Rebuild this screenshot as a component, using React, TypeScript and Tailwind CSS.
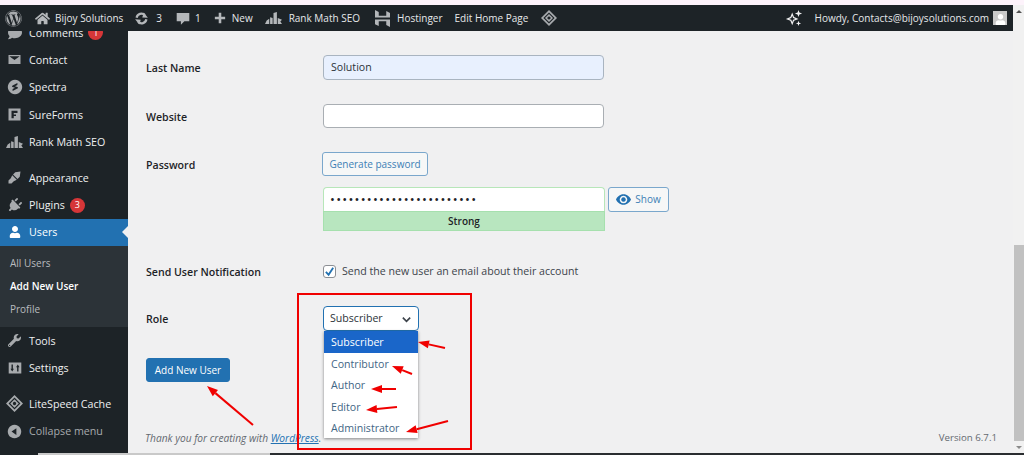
import type { ReactNode } from "react";
import { FaWordpress, FaHome, FaWrench, FaPlug, FaUser, FaComment } from "react-icons/fa";

const WpIcon = ({ children, className = "" }: { children: ReactNode; className?: string }) => (
  <svg viewBox="0 0 20 20" className={`w-[15px] h-[15px] ${className}`} fill="currentColor">
    {children}
  </svg>
);

const RankMathIcon = ({ className = "" }: { className?: string }) => (
  <svg viewBox="0 0 20 14" className={`w-[17px] h-[12px] ${className}`} fill="currentColor">
    <path d="M0 14 L2 10 L5 8 L5 14 Z M6 14 V6 L9 7 L9 14 Z M10 14 V1 L14 0 V14 Z M15 14 V7 L20 9 L18 11 L20 14 Z" />
  </svg>
);

const DiamondIcon = ({ size = 16 }: { size?: number }) => (
  <svg viewBox="0 0 20 20" width={size} height={size} fill="currentColor">
    <path d="M10 0 L20 10 L10 20 L0 10 Z M10 3 L3 10 L10 17 L17 10 Z" fillRule="evenodd" />
    <path d="M10 5 L15 10 L10 15 L5 10 Z M10 8 a2 2 0 1 0 .01 0 Z" fillRule="evenodd" />
  </svg>
);

const AdminBar = () => (
  <div className="h-[26px] bg-[#1d2327] text-[#e6e8ea] text-[10px] flex items-center justify-between pl-[5px] pr-[6px]">
    <div className="flex items-center">
      <FaWordpress className="w-[17px] h-[17px] text-[#a7aaad]" />
      <FaHome className="w-[15px] h-[15px] text-[#b4b7ba] ml-[13px]" />
      <span className="ml-[5px]">Bijoy Solutions</span>
      <svg viewBox="0 0 20 20" className="w-[15px] h-[15px] text-[#b4b7ba] ml-[11px]" fill="none" stroke="currentColor" strokeWidth="3">
        <path d="M3.500 9 A6.500 6.500 0 0 1 14.500 5.500" />
        <path d="M16.500 11 A6.500 6.500 0 0 1 5.500 14.500" />
        <path d="M13 2 L18.500 9 L11 8.500 Z M7 18 L1.500 11 L9 11.500 Z" fill="currentColor" stroke="none" />
      </svg>
      <span className="ml-[7px]">3</span>
      <svg viewBox="0 0 20 20" className="w-[14px] h-[15px] text-[#b4b7ba] ml-[14px]" fill="currentColor">
        <path d="M1 2 H19 V14 H12 L7 19 V14 H1 Z" />
      </svg>
      <span className="ml-[5px]">1</span>
      <svg viewBox="0 0 14 14" className="w-[12px] h-[12px] text-[#b4b7ba] ml-[13px]" fill="currentColor">
        <path d="M5.500 1 H8.500 V5.500 H13 V8.500 H8.500 V13 H5.500 V8.500 H1 V5.500 H5.500 Z" />
      </svg>
      <span className="ml-[6px]">New</span>
      <RankMathIcon className="text-[#b4b7ba] ml-[12px]" />
      <span className="ml-[7px]">Rank Math SEO</span>
      <svg viewBox="0 0 16 18" className="w-[15px] h-[17px] text-[#b4b7ba] ml-[15px]" fill="currentColor">
        <path d="M0 0 L4 2 V6 L12 6 V1 L16 3 V8 H0 Z M0 10 H16 V18 L12 16 V12 H4 V17 L0 15 Z" />
      </svg>
      <span className="ml-[7px]">Hostinger</span>
      <span className="ml-[12px]">Edit Home Page</span>
      <span className="text-[#a7aaad] ml-[13px]">
        <DiamondIcon />
      </span>
    </div>
    <div className="flex items-center">
      <svg viewBox="0 0 20 20" className="w-[18px] h-[18px] text-[#f0f0f1] mr-[12px]" fill="currentColor">
        <path
          fillRule="evenodd"
          d="M8 4 L10 9 L15 11 L10 13 L8 18 L6 13 L1 11 L6 9 Z M8 7.500 L7 10 L4.500 11 L7 12 L8 14.500 L9 12 L11.500 11 L9 10 Z"
        />
        <path d="M15 1 L16 4 L19 5 L16 6 L15 9 L14 6 L11 5 L14 4 Z M15 13 L15.800 15.200 L18 16 L15.800 16.800 L15 19 L14.200 16.800 L12 16 L14.200 15.200 Z" />
      </svg>
      <span>Howdy, Contacts@bijoysolutions.com</span>
      <div className="w-[14px] h-[14px] bg-[#c9c9c9] ml-[4px] overflow-hidden flex items-center justify-center">
        <FaUser className="w-[11px] h-[11px] text-white mt-[3px]" />
      </div>
    </div>
  </div>
);

const MenuItem = ({
  icon,
  label,
  badge,
  active,
  muted,
}: {
  icon: ReactNode;
  label: string;
  badge?: string;
  active?: boolean;
  muted?: boolean;
}) => (
  <div
    className={`relative h-[27.3px] flex items-center shrink-0 ${
      active ? "bg-[#2271b1] text-white" : muted ? "text-[#a7aaad]" : "text-[#eef0f1]"
    }`}
  >
    <div className={`w-[29px] flex justify-center ${active ? "text-white" : "text-[#a7aaad]"}`}>{icon}</div>
    <span>{label}</span>
    {badge && (
      <span className="ml-[5px] w-[15px] h-[15px] rounded-full bg-[#d63638] text-white text-[9px] flex items-center justify-center">
        {badge}
      </span>
    )}
    {active && (
      <span className="absolute right-0 top-1/2 -translate-y-1/2 border-y-[6px] border-y-transparent border-r-[6px] border-r-[#f0f0f1]" />
    )}
  </div>
);

const Sidebar = () => (
  <div className="w-[128px] shrink-0 bg-[#1d2327] overflow-hidden flex flex-col text-[10.7px]">
    <div className="-mt-[12px]" />
    <MenuItem icon={<FaComment className="w-[14px] h-[14px]" />} label="Comments" badge="1" />
    <MenuItem
      icon={
        <WpIcon>
          <path d="M2 4 H18 V16 H2 Z M3.500 6 L10 10.500 L16.500 6 V5.500 H3.500 Z" fillRule="evenodd" />
        </WpIcon>
      }
      label="Contact"
    />
    <MenuItem
      icon={
        <WpIcon className="!w-[16px] !h-[16px]">
          <path
            fillRule="evenodd"
            d="M10 1 a9 9 0 1 0 .01 0 Z M13 5 L7 8 Q5.500 9 7 10 L10 11 L7 12.500 V15 L13 12 Q14.500 11 13 10 L10 9 L13 7.500 Z"
          />
        </WpIcon>
      }
      label="Spectra"
    />
    <MenuItem
      icon={
        <WpIcon>
          <path fillRule="evenodd" d="M2 2 H18 V18 H2 Z M6 5 V15 H9 V12 H12 V10 H9 V8 H14 V5 Z" />
        </WpIcon>
      }
      label="SureForms"
    />
    <MenuItem icon={<RankMathIcon />} label="Rank Math SEO" />
    <div className="h-[8.7px] shrink-0" />
    <MenuItem
      icon={
        <WpIcon>
          <path d="M11 3 L18 2 L17 9 L14 12 L8 6 Z M7 7 L13 13 L9 15 L6 18 L2 18 L2 14 L5 11 Z" />
        </WpIcon>
      }
      label="Appearance"
    />
    <MenuItem icon={<FaPlug className="w-[15px] h-[15px] rotate-[45deg]" />} label="Plugins" badge="3" />
    <MenuItem active icon={<FaUser className="w-[12px] h-[12px]" />} label="Users" />
    <div className="bg-[#2c3338] h-[81px] shrink-0 py-[5.5px] pl-[10px] flex flex-col text-[10px] text-[#b9bcbf]">
      <div className="h-[23px] flex items-center">All Users</div>
      <div className="h-[23px] flex items-center text-white font-semibold">Add New User</div>
      <div className="h-[23px] flex items-center">Profile</div>
    </div>
    <MenuItem icon={<FaWrench className="w-[13px] h-[13px]" />} label="Tools" />
    <MenuItem
      icon={
        <WpIcon className="!w-[14px] !h-[14px]">
          <path
            fillRule="evenodd"
            d="M1 2 H19 V18 H1 Z M5 5 V11 H3.500 L6 15 L8.500 11 H7 V5 Z M13 15 V9 H11.500 L14 5 L16.500 9 H15 V15 Z"
          />
        </WpIcon>
      }
      label="Settings"
    />
    <div className="h-[8.7px] shrink-0" />
    <MenuItem icon={<DiamondIcon size={17} />} label="LiteSpeed Cache" />
    <MenuItem
      muted
      icon={
        <WpIcon>
          <path fillRule="evenodd" d="M10 1 a9 9 0 1 0 .01 0 Z M12.500 5.500 L6 10 L12.500 14.500 Z" />
        </WpIcon>
      }
      label="Collapse menu"
    />
  </div>
);

const FieldLabel = ({ children }: { children: ReactNode }) => (
  <div className="w-[177px] shrink-0 pt-[3px] font-semibold text-[10.6px] text-[#1d2327]">{children}</div>
);

const RoleMenu = () => (
  <div className="absolute left-0 top-[24px] w-[94px] h-[107px] bg-white shadow-[0_1px_3px_rgba(0,0,0,0.45)] flex flex-col text-[#3f6685] z-10">
    <div className="h-[22px] bg-[#1a66c9] text-white flex items-center pl-[7px] pt-[1px]">Subscriber</div>
    <div className="h-[22px] flex items-center pl-[7px] pt-[1px]">Contributor</div>
    <div className="h-[21px] flex items-center pl-[7px]">Author</div>
    <div className="h-[22px] flex items-center pl-[7px] pt-[1px]">Editor</div>
    <div className="h-[20px] flex items-center pl-[7px] pt-[1px]">Administrator</div>
  </div>
);

const Content = () => (
  <div className="flex-1 bg-[#f0f0f1] pl-[18px] pt-[24px] flex flex-col text-[10.6px] text-[#3c434a]">
    <div className="flex items-center">
      <FieldLabel>Last Name</FieldLabel>
      <div className="w-[281px] h-[25px] bg-[#e8f0fe] border border-[#a9b4c0] rounded-[4px] flex items-center pl-[7px] pt-[1px] text-[#2c3338]">
        Solution
      </div>
    </div>
    <div className="flex items-center mt-[24px]">
      <FieldLabel>Website</FieldLabel>
      <div className="w-[281px] h-[24px] bg-white border border-[#a9aeb3] rounded-[4px]" />
    </div>
    <div className="flex items-start mt-[24px]">
      <div className="h-[24px] flex items-center">
        <FieldLabel>Password</FieldLabel>
      </div>
      <div className="-ml-[1px] flex flex-col">
        <div className="w-[106px] h-[24px] bg-[#f6f7f7] border border-[#7aa7cc] rounded-[3px] text-[10px] text-[#3d80b5] flex items-center justify-center">
          Generate password
        </div>
        <div className="flex items-start mt-[11px] ml-[1px]">
          <div className="w-[282px] flex flex-col">
            <div className="h-[24px] bg-white border border-[#b7e6b9] border-b-0 rounded-t-[4px] flex items-center pl-[6px] text-[#1d2327] text-[13px] tracking-[1.25px]">
              ••••••••••••••••••••••••
            </div>
            <div className="h-[20px] bg-[#b8e6bf] border border-[#a6e0ae] text-[10px] text-[#1d2327] font-semibold flex items-center justify-center">
              Strong
            </div>
          </div>
          <div className="ml-[3px] w-[61px] h-[25px] bg-[#f6f7f7] border border-[#7aa7cc] rounded-[3px] text-[10px] text-[#3d80b5] flex items-center justify-center gap-[4px]">
            <svg viewBox="0 0 20 14" className="w-[15px] h-[11px] text-[#2271b1]" fill="currentColor">
              <path
                fillRule="evenodd"
                d="M10 0 C15 0 18.500 3.500 20 7 C18.500 10.500 15 14 10 14 C5 14 1.500 10.500 0 7 C1.500 3.500 5 0 10 0 Z M10 2 A5 5 0 1 0 10.010 2 Z M10 4 A3 3 0 1 1 9.990 4 Z"
              />
            </svg>
            Show
          </div>
        </div>
      </div>
    </div>
    <div className="flex items-center h-[18px] mt-[31px]">
      <FieldLabel>Send User Notification</FieldLabel>
      <div className="w-[13px] h-[13px] bg-white border border-[#8c8f94] rounded-[3px] flex items-center justify-center">
        <svg viewBox="0 0 12 12" className="w-[11px] h-[11px] text-[#2271b1]" fill="none" stroke="currentColor" strokeWidth="2">
          <path d="M2 6.500 L5 9.500 L10 2" />
        </svg>
      </div>
      <span className="ml-[6px] pt-[1px]">Send the new user an email about their account</span>
    </div>
    <div className="flex items-center mt-[26px]">
      <FieldLabel>Role</FieldLabel>
      <div className="relative w-[96px] h-[25px] bg-white border border-[#2271b1] rounded-[4px] flex items-center justify-between pl-[6px] pr-[6px] pt-[1px] text-[#2c3338]">
        Subscriber
        <svg viewBox="0 0 12 12" className="w-[11px] h-[11px]" fill="none" stroke="#3c434a" strokeWidth="1.800">
          <path d="M2 4 L6 8 L10 4" />
        </svg>
        <RoleMenu />
      </div>
    </div>
    <div className="w-[84px] h-[24px] mt-[27px] bg-[#2271b1] border border-[#2271b1] rounded-[3px] text-[10px] text-white flex items-center justify-center">
      Add New User
    </div>
    <div className="mt-auto pr-[16px] pb-[7px] flex items-center justify-between text-[#646970]">
      <span className="italic -ml-[1px] text-[10.2px]">
        Thank you for creating with <span className="text-[#2271b1] underline">WordPress</span>.
      </span>
      <span className="text-[9.7px]">Version 6.7.1</span>
    </div>
  </div>
);

const Scrollbar = () => (
  <div className="w-[11px] shrink-0 bg-[#f1f1f1] flex flex-col items-center">
    <div className="h-[13px] flex items-center justify-center shrink-0">
      <div className="border-x-[3px] border-x-transparent border-b-[3px] border-b-[#505050]" />
    </div>
    <div className="h-[227px] shrink-0" />
    <div className="w-[10px] h-[196px] bg-[#c1c1c1] shrink-0" />
    <div className="flex-1 flex items-center justify-center">
      <div className="border-x-[3px] border-x-transparent border-t-[3px] border-t-[#8a8a8a]" />
    </div>
  </div>
);

const ARROWS = [
  { x1: 253, y1: 425, x2: 207, y2: 386 },
  { x1: 445, y1: 348, x2: 418, y2: 342 },
  { x1: 412, y1: 374, x2: 392, y2: 366 },
  { x1: 396, y1: 389, x2: 371, y2: 389 },
  { x1: 397, y1: 407, x2: 366, y2: 410 },
  { x1: 448, y1: 421, x2: 406, y2: 432 },
];

// red hand drawn arrows on top of the screenshot
const Annotations = () => (
  <svg className="absolute inset-0 w-full h-full pointer-events-none z-20" viewBox="0 0 1024 455">
    {ARROWS.map((a, i) => {
      const len = Math.hypot(a.x2 - a.x1, a.y2 - a.y1);
      const ux = (a.x2 - a.x1) / len;
      const uy = (a.y2 - a.y1) / len;
      const bx = a.x2 - ux * 11;
      const by = a.y2 - uy * 11;
      const head = `${a.x2},${a.y2} ${bx - uy * 4},${by + ux * 4} ${bx + uy * 4},${by - ux * 4}`;
      return (
        <g key={i}>
          <line x1={a.x1} y1={a.y1} x2={bx} y2={by} stroke="#f00000" strokeWidth="2" />
          <polygon points={head} fill="#f00000" />
        </g>
      );
    })}
  </svg>
);

export default function App() {
  return (
    <div
      className="relative w-[1024px] h-[455px] overflow-hidden bg-[#f0f0f1] flex flex-col"
      style={{ fontFamily: '"Open Sans", "Noto Sans", sans-serif' }}
    >
      <div className="h-[5px] bg-[#fdf3fb] shrink-0" />
      <div className="flex-1 min-h-0 flex">
        <div className="w-[1013px] flex flex-col">
          <AdminBar />
          <div className="flex-1 min-h-0 flex">
            <Sidebar />
            <Content />
          </div>
        </div>
        <Scrollbar />
      </div>
      <div className="h-[2px] bg-[#2a2d30] shrink-0 flex">
        <div className="w-[38px] bg-[#1d2327]" />
        <div className="w-[232px] bg-[#c9c9c9]" />
      </div>
      <div className="absolute left-[297px] top-[293px] w-[175px] h-[157px] border-2 border-[#f00000] z-20" />
      <Annotations />
    </div>
  );
}
